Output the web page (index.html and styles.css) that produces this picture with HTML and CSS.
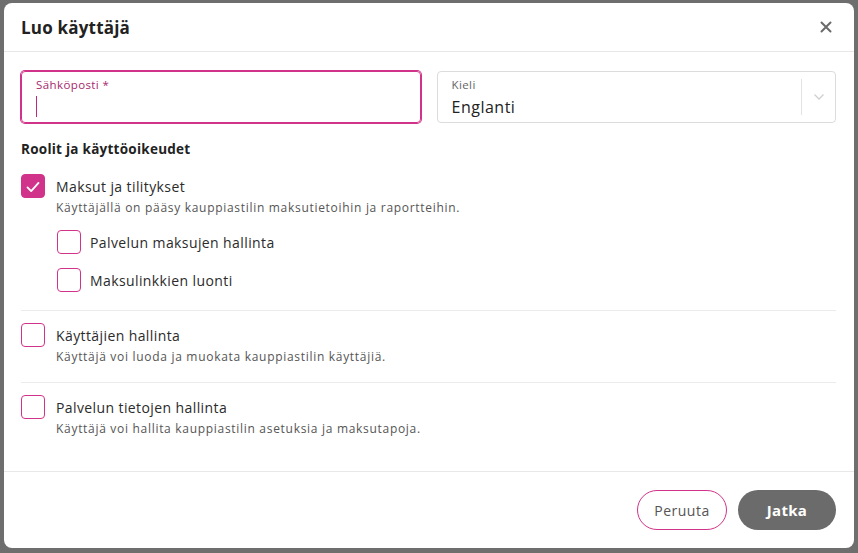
FILE: index.html
```html
<!DOCTYPE html>
<html lang="fi">
<head>
<meta charset="utf-8">
<title>Luo käyttäjä</title>
<link rel="stylesheet" href="styles.css">
</head>
<body>
<div class="modal">
  <div class="modal-header">
    <h1 class="modal-title">Luo käyttäjä</h1>
    <button class="close-btn" aria-label="Sulje">
      <svg width="12" height="12" viewBox="0 0 12 12"><path d="M1.5 1.5 L10.5 10.5 M10.5 1.5 L1.5 10.5" stroke="#6b6b6b" stroke-width="2" stroke-linecap="round"/></svg>
    </button>
  </div>
  <div class="modal-body">
    <div class="fields">
      <div class="field field-focus">
        <span class="field-label label-pink">Sähköposti *</span>
        <span class="caret"></span>
      </div>
      <div class="field field-select">
        <div class="select-value">
          <span class="field-label">Kieli</span>
          <span class="field-value">Englanti</span>
        </div>
        <span class="select-sep"></span>
        <span class="select-arrow">
          <svg width="12" height="8" viewBox="0 0 12 8"><path d="M1.5 1.5 L6 6 L10.5 1.5" fill="none" stroke="#cfcfcf" stroke-width="1.3"/></svg>
        </span>
      </div>
    </div>

    <h2 class="section-title">Roolit ja käyttöoikeudet</h2>

    <div class="role role-first">
      <div class="check-row">
        <span class="box box-checked">
          <svg width="24" height="24" viewBox="0 0 24 24"><path d="M6 12.5 L10 16.5 L18 7.5" fill="none" stroke="#fff" stroke-width="2" stroke-linecap="round" stroke-linejoin="round"/></svg>
        </span>
        <span class="check-label">Maksut ja tilitykset</span>
      </div>
      <p class="desc">Käyttäjällä on pääsy kauppiastilin maksutietoihin ja raportteihin.</p>
      <div class="sub-list">
        <div class="check-row sub-row">
          <span class="box"></span>
          <span class="check-label">Palvelun maksujen hallinta</span>
        </div>
        <div class="check-row sub-row">
          <span class="box"></span>
          <span class="check-label">Maksulinkkien luonti</span>
        </div>
      </div>
    </div>

    <div class="role role-bordered">
      <div class="check-row">
        <span class="box"></span>
        <span class="check-label">Käyttäjien hallinta</span>
      </div>
      <p class="desc">Käyttäjä voi luoda ja muokata kauppiastilin käyttäjiä.</p>
    </div>

    <div class="role role-bordered">
      <div class="check-row">
        <span class="box"></span>
        <span class="check-label">Palvelun tietojen hallinta</span>
      </div>
      <p class="desc">Käyttäjä voi hallita kauppiastilin asetuksia ja maksutapoja.</p>
    </div>
  </div>
  <div class="modal-footer">
    <button class="btn btn-outline">Peruuta</button>
    <button class="btn btn-primary">Jatka</button>
  </div>
</div>
</body>
</html>
```
FILE: styles.css
```css
* { box-sizing: border-box; }
html, body { margin: 0; height: 100%; }
body {
  background: #6e6e6e;
  padding: 3px 4px 5px 4px;
  font-family: "Open Sans", "Noto Sans", sans-serif;
  color: #2b2b2b;
}
.modal {
  width: 850px;
  height: 545px;
  background: #fff;
  border-radius: 8px;
  display: flex;
  flex-direction: column;
}
.modal-header {
  height: 49px;
  border-bottom: 1px solid #e8e8e8;
  display: flex;
  align-items: center;
  justify-content: space-between;
  padding: 0 22px 0 17px;
}
.modal-title {
  margin: 0;
  font-size: 17px;
  font-weight: 700;
  color: #222;
  letter-spacing: 0.2px;
}
.close-btn {
  background: none;
  border: 0;
  padding: 0;
  width: 12px;
  height: 12px;
  display: flex;
  cursor: pointer;
}
.modal-body {
  flex: 1;
  padding: 19px 18px 0 17px;
}
.fields {
  display: grid;
  grid-template-columns: 1fr 1fr;
  gap: 16px;
}
.field {
  height: 52px;
  border: 1px solid #dcdcdc;
  border-radius: 4px;
  padding: 5px 14px;
  display: flex;
  flex-direction: column;
}
.field-focus {
  border-color: #d1338a;
  box-shadow: 0 0 0 1px #d1338a;
}
.field-label {
  font-size: 11.5px;
  line-height: 16px;
  color: #666;
  letter-spacing: 0.4px;
}
.label-pink { color: #a6286e; }
.caret {
  width: 1px;
  height: 21px;
  background: #c0287a;
  margin-top: 3px;
}
.field-select {
  flex-direction: row;
  align-items: center;
  padding: 0 0 0 14px;
}
.select-value {
  flex: 1;
  display: flex;
  flex-direction: column;
  align-self: stretch;
  padding-top: 5px;
}
.field-value {
  font-size: 16px;
  line-height: 22px;
  margin-top: 3px;
  color: #222;
  letter-spacing: 0.5px;
}
.select-sep {
  width: 1px;
  height: 36px;
  background: #e2e2e2;
}
.select-arrow {
  width: 33px;
  display: flex;
  justify-content: center;
}
.section-title {
  margin: 17px 0 0;
  font-size: 13.5px;
  font-weight: 700;
  line-height: 18px;
  color: #222;
  letter-spacing: 0.25px;
}
.role { padding: 12px 0 17px; }
.role-first { padding: 16px 0 18px; }
.role-bordered { border-top: 1px solid #ebebeb; }
.check-row {
  display: flex;
  align-items: center;
  gap: 11px;
}
.box {
  width: 24px;
  height: 24px;
  border: 1px solid #d1338a;
  border-radius: 4px;
  flex: none;
  display: flex;
}
.box-checked { background: #d1338a; }
.check-label {
  font-size: 14px;
  color: #2b2b2b;
  letter-spacing: 0.4px;
}
.desc {
  margin: 1px 0 0 35px;
  font-size: 12px;
  color: #555;
  line-height: 17px;
  letter-spacing: 0.7px;
}
.sub-list {
  display: flex;
  flex-direction: column;
  gap: 14px;
  padding: 14px 0 0 36px;
}
.sub-row { gap: 9px; }
.modal-footer {
  height: 77px;
  border-top: 1px solid #e8e8e8;
  display: flex;
  justify-content: flex-end;
  align-items: center;
  gap: 11px;
  padding: 0 18px 0 0;
}
.btn {
  height: 40px;
  border-radius: 20px;
  font-family: inherit;
  font-size: 14px;
  cursor: pointer;
}
.btn-outline {
  width: 90px;
  background: #fff;
  border: 1px solid #d1338a;
  color: #555;
  letter-spacing: 0.5px;
}
.btn-primary {
  width: 98px;
  background: #6b6b6b;
  border: 0;
  color: #fff;
  font-weight: 700;
  font-size: 15px;
  letter-spacing: 0.3px;
}
```
